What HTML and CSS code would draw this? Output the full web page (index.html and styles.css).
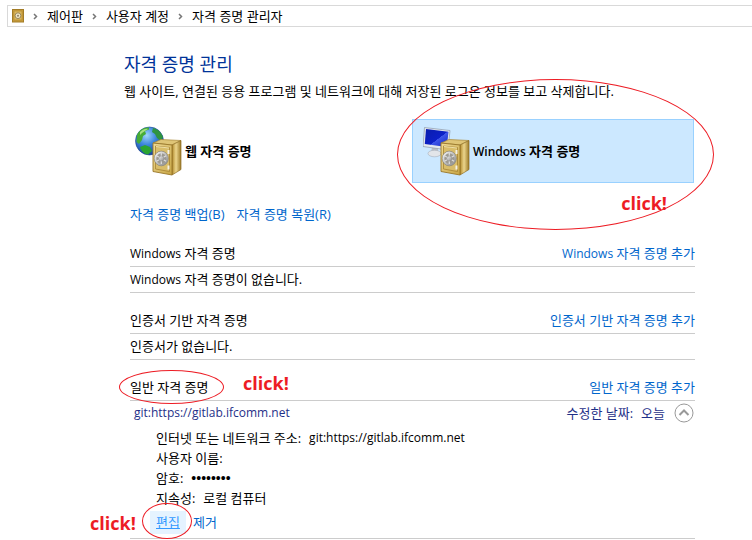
FILE: index.html
```html
<!DOCTYPE html>
<html lang="ko">
<head>
    <meta charset="UTF-8">
    <title>자격 증명 관리자</title>
    <link rel="stylesheet" href="styles.css">
</head>
<body>
<!-- shared gradients and the safe drawing -->
<svg class="defs" width="0" height="0" aria-hidden="true">
    <defs>
        <linearGradient id="gold" x1="0" y1="0" x2="1" y2="1">
            <stop offset="0" stop-color="#f0dc98"/>
            <stop offset="1" stop-color="#c8a544"/>
        </linearGradient>
        <linearGradient id="goldSide" x1="0" y1="0" x2="1" y2="0">
            <stop offset="0" stop-color="#b18a2c"/>
            <stop offset="0.45" stop-color="#ecd58c"/>
            <stop offset="1" stop-color="#9c7a27"/>
        </linearGradient>
        <linearGradient id="steel" x1="0" y1="0" x2="1" y2="1">
            <stop offset="0" stop-color="#f4f4f4"/>
            <stop offset="1" stop-color="#8b8b8b"/>
        </linearGradient>
        <radialGradient id="sea" cx="0.4" cy="0.3" r="0.75">
            <stop offset="0" stop-color="#9fd6fb"/>
            <stop offset="0.45" stop-color="#3d86dc"/>
            <stop offset="1" stop-color="#123a94"/>
        </radialGradient>
        <linearGradient id="screen" x1="0" y1="0" x2="1" y2="1">
            <stop offset="0" stop-color="#0a1dac"/>
            <stop offset="0.55" stop-color="#0c20c8"/>
            <stop offset="0.56" stop-color="#3e56ea"/>
            <stop offset="1" stop-color="#1024c0"/>
        </linearGradient>
        <g id="safe">
            <path d="M18 17 L26 13.500 L46 14.500 L37 19 Z" fill="#dfc577" stroke="#a88636" stroke-width="0.7"/>
            <path d="M37 19 L46 14.500 L46 43.500 L37 49 Z" fill="url(#goldSide)" stroke="#8f6f25" stroke-width="0.7"/>
            <path d="M18 17 L37 19 L37 49 L18 45.500 Z" fill="url(#gold)" stroke="#987628" stroke-width="0.9"/>
            <path d="M20.500 20 L34.500 21.500 L34.500 45.500 L20.500 43 Z" fill="#d9bd69" stroke="#a68333" stroke-width="0.8"/>
            <path d="M21 20.500 L34 22" stroke="#f8ecbd" stroke-width="0.8"/>
            <ellipse cx="26.300" cy="32.500" rx="7" ry="7.300" fill="#9d9a92" stroke="#777" stroke-width="0.6"/>
            <ellipse cx="26.300" cy="32.500" rx="5.900" ry="6.200" fill="none" stroke="url(#steel)" stroke-width="1.800"/>
            <path d="M26.300 27 V38 M21.500 29.800 L31.100 35.200 M31.100 29.800 L21.500 35.200" stroke="#dedede" stroke-width="1.200"/>
            <circle cx="26.300" cy="32.500" r="2.600" fill="url(#steel)" stroke="#868686" stroke-width="0.5"/>
            <path d="M33.500 24 V28 M33.500 39.500 V43.500" stroke="#f5f2e4" stroke-width="2"/>
        </g>
    </defs>
</svg>

<nav class="address-bar">
    <svg class="address-icon" viewBox="0 0 12 14" aria-hidden="true">
        <rect x="0.500" y="0.500" width="11" height="12.500" fill="#c99d3c" stroke="#a37c26"/>
        <rect x="2" y="2" width="8" height="9" fill="#dcb85e" stroke="#b38a30" stroke-width="0.7"/>
        <circle cx="6" cy="6.700" r="2.900" fill="#eee3c1" stroke="#87754a" stroke-width="0.8"/>
        <circle cx="6" cy="6.700" r="1" fill="#8c8064"/>
    </svg>
    <svg class="chevron" viewBox="0 0 5 7"><path d="M1 1 L3.500 3.500 L1 6"/></svg>
    <a href="#">제어판</a>
    <svg class="chevron" viewBox="0 0 5 7"><path d="M1 1 L3.500 3.500 L1 6"/></svg>
    <a href="#">사용자 계정</a>
    <svg class="chevron" viewBox="0 0 5 7"><path d="M1 1 L3.500 3.500 L1 6"/></svg>
    <a href="#">자격 증명 관리자</a>
</nav>

<main class="content">
    <h1>자격 증명 관리</h1>
    <p class="description">웹 사이트, 연결된 응용 프로그램 및 네트워크에 대해 저장된 로그온 정보를 보고 삭제합니다.</p>

    <div class="tiles">
        <div class="tile-wrap">
            <button type="button" class="tile">
                <svg class="tile-icon" viewBox="0 0 48 50" aria-hidden="true">
                    <circle cx="14.500" cy="15" r="14" fill="url(#sea)" stroke="#1c4690" stroke-width="0.6"/>
                    <path d="M2 9 C4 4 9 1 14 1.500 L14 3.500 L10 5 L11 8 L8 10 L7 14 L4 18 L1.500 16 Z" fill="#46ac35"/>
                    <path d="M18 2 C23 3 26 6 28 11 L26 15 L22 12 L20 8 L17 6 Z" fill="#2f9440"/>
                    <path d="M5 21 L10 19 L15 21 L17 25 L13 28.500 C9 28 6 25 5 21 Z" fill="#2ba432"/>
                    <path d="M5 6 C8 3 11 2.500 13 3 L10 5 L7 7 L5 9 Z" fill="#a5df82"/>
                    <use href="#safe"/>
                </svg>
                <span>웹 자격 증명</span>
            </button>
        </div>
        <div class="tile-wrap">
            <button type="button" class="tile selected">
                <svg class="tile-icon" viewBox="0 0 48 50" aria-hidden="true">
                    <path d="M9 21 L15 22 L15 27 L8 27 Z" fill="#b9bec6"/>
                    <ellipse cx="11.500" cy="27.500" rx="6.500" ry="3.300" fill="#e2e5e9" stroke="#a8afb8" stroke-width="0.6"/>
                    <path d="M1.500 1.500 L27 4.500 L25 24 L0 20.500 Z" fill="#e3e8ee" stroke="#8d99aa" stroke-width="0.7"/>
                    <path d="M3 3 L25.500 5.700 L23.800 21 L1.800 18 Z" fill="url(#screen)"/>
                    <use href="#safe"/>
                </svg>
                <span><span class="latin">Windows</span> 자격 증명</span>
            </button>
            <span class="ring ring-tile"></span>
            <span class="click click-tile">click!</span>
        </div>
    </div>

    <div class="vault">
        <div class="vault-links">
            <a href="#">자격 증명 백업(B)</a>
            <a href="#">자격 증명 복원(R)</a>
        </div>

        <section class="group">
            <header class="group-header">
                <h2><span class="latin">Windows</span> 자격 증명</h2>
                <a href="#"><span class="latin">Windows</span> 자격 증명 추가</a>
            </header>
            <p class="empty"><span class="latin">Windows</span> 자격 증명이 없습니다.</p>
        </section>

        <section class="group">
            <header class="group-header">
                <h2>인증서 기반 자격 증명</h2>
                <a href="#">인증서 기반 자격 증명 추가</a>
            </header>
            <p class="empty">인증서가 없습니다.</p>
        </section>

        <section class="group">
            <header class="group-header">
                <h2 class="marked">일반 자격 증명
                    <span class="ring ring-heading"></span>
                    <span class="click click-heading">click!</span>
                </h2>
                <a href="#">일반 자격 증명 추가</a>
            </header>
            <div class="credential">
                <div class="credential-header">
                    <span class="latin">git:https://gitlab.ifcomm.net</span>
                    <span class="modified"><span>수정한 날짜:</span><span>오늘</span></span>
                    <button type="button" class="toggle" aria-label="접기">
                        <svg viewBox="0 0 20 20"><circle cx="10" cy="10" r="9"/><path d="M5.500 12 L10 7.500 L14.500 12"/></svg>
                    </button>
                </div>
                <dl class="details">
                    <div><dt>인터넷 또는 네트워크 주소:</dt><dd class="latin">git:https://gitlab.ifcomm.net</dd></div>
                    <div><dt>사용자 이름:</dt><dd></dd></div>
                    <div><dt>암호:</dt><dd class="password">••••••••</dd></div>
                    <div><dt>지속성:</dt><dd>로컬 컴퓨터</dd></div>
                </dl>
                <div class="actions">
                    <span class="marked">
                        <a href="#" class="edit">편집</a>
                        <span class="ring ring-edit"></span>
                        <span class="click click-edit">click!</span>
                    </span>
                    <a href="#">제거</a>
                </div>
            </div>
        </section>
    </div>
</main>
</body>
</html>
```

FILE: styles.css
```css
* {
    box-sizing: border-box;
}

body {
    margin: 0;
    padding: 5px 0 0 7px;
    background: #fff;
    color: #000;
    font-family: "Open Sans", "Noto Sans CJK KR", sans-serif;
    font-size: 13px;
    line-height: 20px;
    overflow-x: hidden;
}

h1, h2, p, dl, dd {
    margin: 0;
    font-weight: normal;
}

a {
    color: #0066cc;
    text-decoration: none;
    white-space: nowrap;
}

.defs {
    position: absolute;
}

.latin {
    font-size: 12px;
}

/* address bar */
.address-bar {
    display: flex;
    align-items: center;
    height: 22px;
    padding-left: 4px;
    border: 1px solid #d9d9d9;
    border-right: 0;
}

.address-bar a {
    color: #000;
}

.address-icon {
    width: 12px;
    height: 14px;
}

.chevron {
    width: 5px;
    height: 7px;
    margin: 0 9px;
    fill: none;
    stroke: #777;
    stroke-width: 1.5;
}

/* main column */
.content {
    padding: 25px 57px 0 117px;
}

h1 {
    font-size: 18px;
    line-height: 24px;
    color: #003399;
}

.description {
    margin-top: 5px;
    white-space: nowrap;
}

.tiles {
    display: grid;
    grid-template-columns: 1fr 1fr;
    gap: 6px;
    margin-top: 18px;
    padding-right: 1px;
}

.tile-wrap,
.marked {
    position: relative;
}

.tile {
    display: flex;
    align-items: center;
    gap: 2px;
    width: 100%;
    height: 64px;
    padding: 0 10px;
    border: 1px solid transparent;
    background: none;
    color: #000;
    font: inherit;
    font-weight: 600;
}

.tile.selected {
    border-color: #99d1ff;
    background: #cce8ff;
}

.tile-icon {
    width: 48px;
    height: 50px;
}

.vault {
    padding-left: 6px;
}

.vault-links {
    display: flex;
    gap: 12px;
    margin: 21px 0 19px;
}

/* credential groups */
.group {
    margin-bottom: 17px;
}

.group-header {
    display: flex;
    justify-content: space-between;
    height: 24px;
    border-bottom: 1px solid #ccc;
}

h2 {
    height: 20px;
    font-size: 13px;
}

.empty {
    height: 26px;
    padding-top: 2px;
    border-bottom: 1px solid #ccc;
}

.credential {
    padding-bottom: 4px;
    border-bottom: 1px solid #ccc;
}

.credential-header {
    display: flex;
    align-items: center;
    height: 24px;
    padding: 0 1px 0 4px;
    color: #1f3088;
}

.modified {
    display: flex;
    gap: 8px;
    margin-left: auto;
}

.toggle {
    width: 20px;
    height: 20px;
    margin-left: 9px;
    padding: 0;
    border: 0;
    background: none;
}

.toggle svg {
    display: block;
    fill: none;
    stroke: #999;
}

.toggle path {
    stroke-width: 2;
}

.details {
    padding: 3px 0 3px 26px;
}

.details div {
    display: flex;
    gap: 8px;
}

.password {
    font-family: "Liberation Sans", sans-serif;
    font-size: 14px;
}

.actions {
    display: flex;
    gap: 7px;
    padding-left: 20px;
    line-height: 23px;
}

.edit {
    display: block;
    padding: 0 6px;
    background: #e5f3ff;
    color: #3399ff;
    text-decoration: underline;
}

/* hand-drawn markers over the page */
.ring {
    position: absolute;
    border: 1px solid #ed1c24;
    border-radius: 50%;
    pointer-events: none;
}

.click {
    position: absolute;
    color: #ed1c24;
    font-size: 18px;
    font-weight: bold;
    line-height: 24px;
}

.ring-tile {
    inset: -40px -20px -47px -15px;
}

.click-tile {
    right: 27px;
    bottom: -32px;
}

.ring-heading {
    inset: -7px -15px -7px -11px;
}

.click-heading {
    left: 113px;
    top: -6px;
}

.ring-edit {
    inset: -8px -6px -5px -8px;
}

.click-edit {
    right: 50px;
    top: 0;
}
```
